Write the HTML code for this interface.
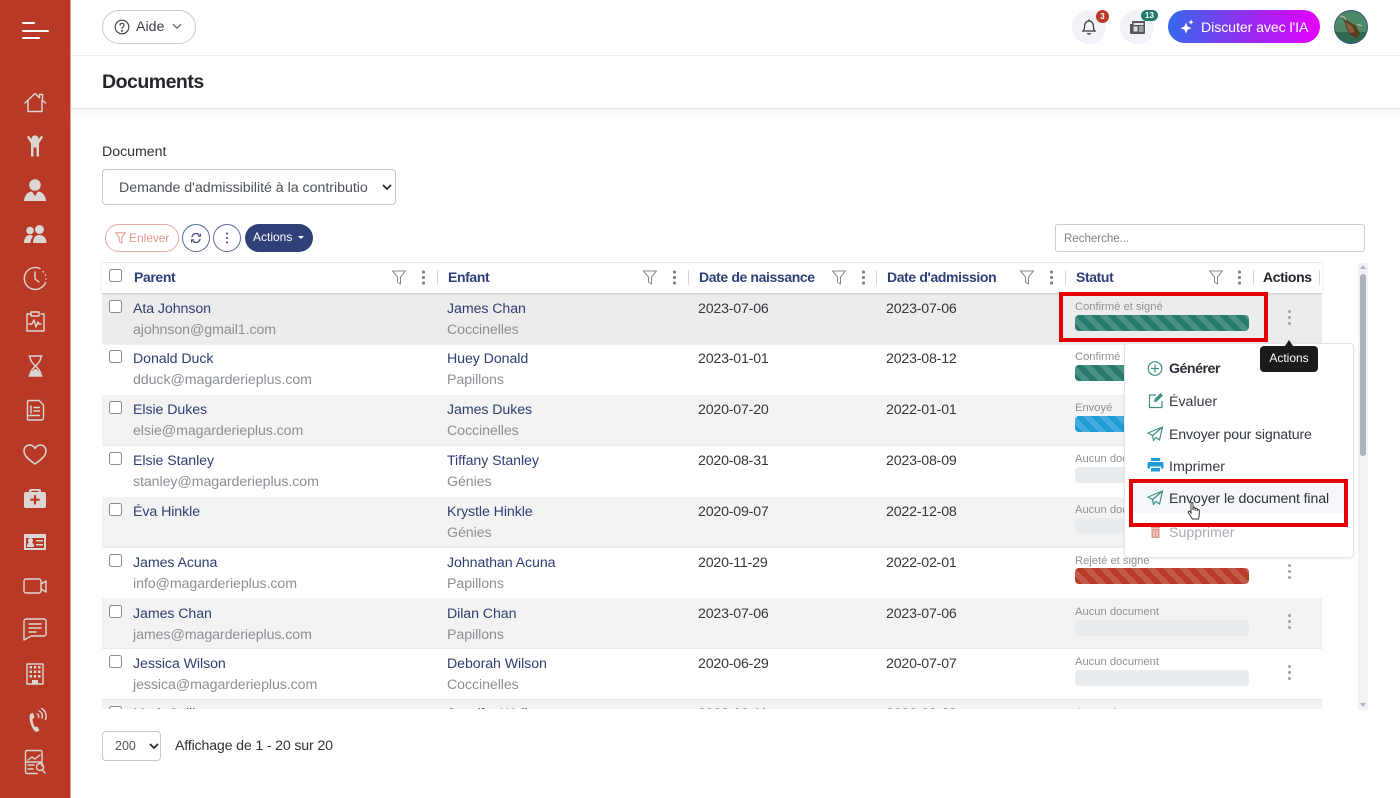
<!DOCTYPE html>
<html lang="fr"><head><meta charset="utf-8"><title>Documents</title>
<style>
html,body{margin:0;padding:0;background:#fff}
body{width:1400px;height:798px;position:relative;overflow:hidden;font-family:"Liberation Sans",Arial,sans-serif;font-size:14.2px;color:#2b2f36}
.t,.a,.n,.s,.d,.h,.l,.m{position:absolute;white-space:nowrap;height:20px;line-height:20px}
.t,.n,.s,.d,.l,.m{margin-top:1px}
.a,svg.a{height:auto;line-height:normal}
.n{left:133px;color:#2f3f73;letter-spacing:-.08px}.s{left:133px;color:#8b9095;letter-spacing:-.08px}
.ch{left:447px}.d{color:#33373d;letter-spacing:-.2px}.d1{left:698px}.d2{left:886px}
.h{font-weight:bold;color:#2f3f78;font-size:14px;top:267px;letter-spacing:-.38px}
.l{left:1075px;font-size:11.2px;color:#8d9296}
.bar{position:absolute;left:1075px;width:174px;height:16px;border-radius:4px;background:#e9ecef}
.g{background:repeating-linear-gradient(45deg,#257a6c 0 5.6px,#4a9186 5.6px 11.3px)}
.b{background:repeating-linear-gradient(45deg,#1f9bd6 0 5.6px,#45aede 5.6px 11.3px)}
.r{background:repeating-linear-gradient(45deg,#b83a28 0 5.6px,#c25a4b 5.6px 11.3px)}
.cb{position:absolute;left:109px;width:11px;height:11px;border:1.3px solid #8c8c8c;border-radius:2.5px;background:#fff}
.row{position:absolute;left:102px;width:1220px}
.odd{background:#f3f3f3}
.sep{position:absolute;top:270px;width:1px;height:15px;background:#d5d8dd}
.k{position:absolute;width:2.6px;height:2.6px;border-radius:50%;background:#7d7f85;box-shadow:0 -5.5px 0 #7d7f85,0 5.5px 0 #7d7f85}
.kr{width:3px;height:3px;background:#9aa3ad;box-shadow:0 -6px 0 #9aa3ad,0 6px 0 #9aa3ad}
.m{left:1169px;color:#343a40;font-size:14.2px}
</style></head><body>

<!-- sidebar -->
<div class="a" style="left:0;top:0;width:70px;height:798px;background:#b83a26;border-right:1px solid #e2a297;box-sizing:content-box"></div>
<svg class="a" style="left:0;top:0" width="70" height="798" viewBox="0 0 70 798" fill="none" stroke="#dbd6d2" stroke-width="1.4" stroke-linecap="round" stroke-linejoin="round">
 <g stroke="#fff" stroke-width="2"><path d="M23 23h11M23 31h25M23 38h16"/></g>
 <!-- home -->
 <path d="M25 103 35 93.500l4.500 4.200v-3.200h3v6L45.500 103M28 100.500v11h14v-11"/>
 <!-- child -->
 <g fill="#dbd6d2" stroke="none"><circle cx="35" cy="139" r="3.600"/><path d="M27 137l1.500-1.500 4 5h5l4-5L43 137l-4 6.500v13h-2.500v-9h-3v9H31v-13z"/></g>
 <!-- person -->
 <g fill="#dbd6d2" stroke="none"><circle cx="35" cy="185" r="5.800"/><path d="M24 201c.5-6 3.500-9 8-9.500l3 4.500 3-4.500c4.500.5 7.500 3.500 8 9.500z"/></g>
 <!-- people -->
 <g fill="#dbd6d2" stroke="none"><circle cx="30" cy="230.500" r="3.800"/><circle cx="39.500" cy="229.500" r="4.500"/><path d="M24 243c0-5 2.500-8 6-8 1.500 0 2.500.5 3 1-1.500 2-2.500 4.500-2.500 7zM33 243c0-5 2.500-8 6.500-8s7 3 7 8z"/></g>
 <!-- clock -->
 <path d="M40 268.500a11 11 0 1 0 5.500 14"/><path d="M35 272v7l4 3"/><path d="M43 271.500l.5.5M45.500 275v.2M46 279v.2" stroke-dasharray="1 1"/>
 <!-- clipboard pulse -->
 <path d="M30 314h-3v17h17v-17h-3M31 312h8v4h-8zM29 324h3l2-4 2 7 2-5 1 2h2" />
 <!-- hourglass -->
 <path d="M29 356h13M29 376h13M30 356c0 4.500 2 6.500 5.500 10 3.500-3.500 5.500-5.500 5.500-10M30 376c0-4.500 2-6.500 5.500-10 3.500 3.500 5.500 5.500 5.500 10"/><path fill="#dbd6d2" d="M31 375.500c.5-3 2.500-5 4.500-6 2 1 4 3 4.500 6z"/>
 <!-- invoice -->
 <path d="M28.500 400.500h10.500l4.500 4.500v13a2 2 0 0 1-2 2h-13a1 1 0 0 1-1-1v-17a1.500 1.500 0 0 1 1-1.500zM34 407.500h5.500M34 411h5.500M29 415.500h10.500M31 406v7"/>
 <!-- heart -->
 <path d="M35 464c-7-5-11-8.500-11-13 0-3.500 2.500-6 5.500-6 2.500 0 4.500 1.500 5.500 3.500 1-2 3-3.500 5.500-3.500 3 0 5.500 2.500 5.500 6 0 4.500-4 8-11 13z" stroke-width="1.500"/>
 <!-- medkit -->
 <path fill="#dbd6d2" stroke="none" d="M31 489h8a2 2 0 0 1 2 2v1h3a2 2 0 0 1 2 2v12a2 2 0 0 1-2 2H26a2 2 0 0 1-2-2v-12a2 2 0 0 1 2-2h3v-1a2 2 0 0 1 2-2zm.500 1.800v1.200h7v-1.200z"/><path stroke="#b83a26" stroke-width="2.200" d="M35 496v7.500M31.200 499.700h7.600"/>
 <!-- id -->
 <path fill="#dbd6d2" stroke="none" d="M24 534h22v16H24zm2 4v10h18v-10z"/><path fill="#dbd6d2" stroke="none" d="M27 547c0-3 1-4 2-4.500a2.500 2.500 0 1 1 3 0c1 .5 2 1.500 2 4.500zM36 540h7v1.500h-7zM36 544h7v1.500h-7z"/>
 <!-- video -->
 <path d="M26 579h13a2 2 0 0 1 2 2v10a2 2 0 0 1-2 2H26a2 2 0 0 1-2-2v-10a2 2 0 0 1 2-2zM41 584l5-3v11l-5-3"/>
 <!-- chat -->
 <path d="M26 619h18a2 2 0 0 1 2 2v13a2 2 0 0 1-2 2H31l-7 4v-19a2 2 0 0 1 2-2zM29 624h12M29 628h12M29 632h7"/>
 <!-- building -->
 <path d="M27 664h16v20H27z"/><path stroke="none" fill="#dbd6d2" d="M29.500 666h2.500v2.500h-2.500zM33.800 666h2.500v2.500h-2.500zM38 666h2.500v2.500H38zM29.500 670.500h2.500v2.500h-2.500zM33.800 670.500h2.500v2.500h-2.500zM38 670.500h2.500v2.500H38zM29.500 675h2.500v2.500h-2.500zM33.800 675h2.500v2.500h-2.500zM38 675h2.500v2.500H38zM32 680h6v4h-6z"/>
 <!-- phone -->
 <path fill="#dbd6d2" stroke="none" d="M30 714l3-1 1.500 4.500-2 1.500c0 3 1 6 2.500 8l2.500-.5 2 4-3 1.500c-5-2-8-13-6.500-18z"/><path d="M37 714c1.500.5 2 2 1.500 3.500M39 711c3 1 4 4 3 7M41.500 708.500c4 2 5.500 6.500 4 11"/>
 <!-- report -->
 <path d="M42 766v-14a1.500 1.500 0 0 0-1.500-1.500H27a1.500 1.500 0 0 0-1.500 1.500v20a1.500 1.500 0 0 0 1.500 1.500h10M28 760l4-3 3 2 5-4M26 762h16M28 765h6M28 769h5"/><circle cx="40" cy="767" r="3.500"/><path d="M42.500 770l2.500 3"/>
</svg>

<!-- topbar -->
<div class="a" style="left:71px;top:55px;width:1329px;height:1px;background:#eceef1"></div>
<div class="a" style="left:102px;top:10px;width:92px;height:32px;border:1px solid #c4c9d2;border-radius:17px"></div>
<svg class="a" style="left:114px;top:19px" width="16" height="16" viewBox="0 0 16 16" fill="none" stroke="#3d4148" stroke-width="1.100"><circle cx="8" cy="8" r="6.800"/><path d="M6 6.300a2 2 0 1 1 3 1.700c-.7.400-1 .9-1 1.500" stroke-linecap="round"/><circle cx="8" cy="11.700" r=".4" fill="#3d4148"/></svg>
<div class="t" style="left:136px;top:16px;color:#3b4046">Aide</div>
<svg class="a" style="left:172px;top:23px" width="10" height="7" viewBox="0 0 10 7" fill="none" stroke="#5a5f66" stroke-width="1.100"><path d="M1 1.200l4 4 4-4"/></svg>

<div class="a" style="left:1072px;top:10px;width:34px;height:34px;border-radius:50%;background:#f1f3f9"></div>
<svg class="a" style="left:1081px;top:18px" width="16" height="18" viewBox="0 0 16 18" fill="none" stroke="#33363b" stroke-width="1.200"><path d="M2 13c1.200-1.200 1.600-2.500 1.600-5C3.600 5 5.500 3 8 3s4.400 2 4.400 5c0 2.500.4 3.800 1.600 5zM8 1.300V3M6.500 15a1.600 1.600 0 0 0 3 0"/></svg>
<div class="a" style="left:1096px;top:10px;width:13px;height:13px;border-radius:50%;background:#b83a28;color:#fff;font-size:8px;font-weight:bold;line-height:13px;text-align:center">3</div>
<div class="a" style="left:1120px;top:10px;width:34px;height:34px;border-radius:50%;background:#f1f3f9"></div>
<svg class="a" style="left:1130px;top:20px" width="15" height="14" viewBox="0 0 15 14"><path fill="#55585c" d="M2 1h13v12a1 1 0 0 1-1 1H1a1 1 0 0 1-1-1V4h2z"/><path fill="#dfe1e5" d="M3.500 3h10v2h-10zM3.500 6.500h4v5h-4zM9 6.500h4.500v1H9zM9 8.500h4.500v1H9zM9 10.500h4.500v1H9z"/></svg>
<div class="a" style="left:1141px;top:10px;width:17px;height:11px;border-radius:6px;background:#227a6c;color:#fff;font-size:8px;font-weight:bold;line-height:11px;text-align:center">13</div>

<div class="a" style="left:1168px;top:10px;width:152px;height:33px;border-radius:17px;background:linear-gradient(90deg,#3468ec 0%,#9a2af0 55%,#e600ff 100%)"></div>
<svg class="a" style="left:1180px;top:19px" width="14" height="15" viewBox="0 0 14 15" fill="#fff"><path d="M6 3.500l1.600 4 4 1.600-4 1.600L6 14.500l-1.600-3.800-4-1.600 4-1.600zM11 .5l.8 1.900 1.900.8-1.900.8-.8 1.900-.8-1.900-1.900-.8 1.900-.8z"/></svg>
<div class="t" style="left:1201px;top:17px;color:#fff;font-size:14.2px;letter-spacing:-.1px">Discuter avec l'IA</div>
<svg class="a" style="left:1334px;top:10px" width="34" height="34" viewBox="0 0 34 34"><defs><clipPath id="av"><circle cx="17" cy="17" r="16"/></clipPath></defs><circle cx="17" cy="17" r="17" fill="#3c4f7d"/><g clip-path="url(#av)"><rect width="34" height="34" fill="#4c8a68"/><rect y="22" width="34" height="12" fill="#2f6a50"/><path d="M8 8l6 3 8 5 4 8-3 4-7-3-4-8-1-5z" fill="#5b3a22"/><path d="M12 12l6 4 3 6-5 1-3-6z" fill="#8a5f3c"/><path d="M6 6l4 1 2 3M23 14l5 2" stroke="#c9b9a4" stroke-width="1.200" fill="none"/></g></svg>

<div class="t" style="left:102px;top:71px;font-size:19.500px;font-weight:bold;color:#23272d;letter-spacing:-.5px">Documents</div>
<div class="a" style="left:71px;top:108px;width:1329px;height:1px;background:#dfe1e5"></div>
<div class="a" style="left:71px;top:109px;width:1329px;height:14px;background:linear-gradient(#f7f7f8,#fff)"></div>

<div class="t" style="left:102px;top:140px;color:#2f3338;margin-top:1.500px;letter-spacing:-.03px"><span style="position:relative;top:.5px">Document</span></div>
<div class="a" style="left:102px;top:169px;width:292px;height:34px;border:1px solid #c3c8d1;border-radius:4px"></div>
<div class="t" style="left:119px;top:177px;color:#4c5258;letter-spacing:-.02px">Demande d'admissibilité à la contributio</div>
<svg class="a" style="left:382px;top:184px" width="10" height="7" viewBox="0 0 10 7" fill="none" stroke="#2b2b2b" stroke-width="1.800"><path d="M1 1l4 4 4-4"/></svg>

<!-- toolbar -->
<div class="a" style="left:105px;top:224px;width:72px;height:26px;border:1px solid #e4a89f;border-radius:14px"></div>
<svg class="a" style="left:115px;top:232px" width="11" height="12" viewBox="0 0 11 12" fill="none" stroke="#e1978b" stroke-width="1"><path d="M.5.700h10L6.800 5.500v5.500L4.200 9.500v-4z"/></svg>
<div class="t" style="left:129px;top:227px;color:#e1978b;font-size:12px;letter-spacing:-.05px">Enlever</div>
<div class="a" style="left:182px;top:224px;width:26px;height:26px;border:1px solid #5a6a9a;border-radius:50%"></div>
<svg class="a" style="left:190px;top:232px" width="12" height="12" viewBox="0 0 16 14" fill="none" stroke="#33437a" stroke-width="1.500"><path d="M2.500 6a5.500 5.500 0 0 1 10-2.500M13.500 8a5.500 5.500 0 0 1-10 2.500"/><path d="M14 1v3.500h-3.500M2 13V9.500h3.500" stroke-width="1.200"/></svg>
<div class="a" style="left:213px;top:224px;width:26px;height:26px;border:1px solid #5a6a9a;border-radius:50%"></div>
<div class="k" style="left:225.500px;top:237px;background:#33437a;box-shadow:0 -4.500px 0 #33437a,0 4.500px 0 #33437a;width:2.200px;height:2.200px"></div>
<div class="a" style="left:245px;top:224px;width:68px;height:28px;border-radius:14px;background:#2f4178"></div>
<div class="t" style="left:253px;top:226px;color:#fff;font-size:12px">Actions</div>
<div class="a" style="left:298px;top:236px;border:3px solid transparent;border-top-color:#fff;border-bottom:0"></div>
<div class="a" style="left:1055px;top:224px;width:308px;height:26px;border:1px solid #c9ced6;border-radius:3px"></div>
<div class="t" style="left:1064px;top:228px;color:#7c8288;font-size:11.500px">Recherche...</div>

<!-- table rows -->
<div class="row" style="top:293px;height:51px;background:#ececec"></div>
<div class="row odd" style="top:395px;height:50px"></div>
<div class="row odd" style="top:497px;height:50px"></div>
<div class="row odd" style="top:598px;height:50px"></div>
<div class="row odd" style="top:699px;height:10px;background:#f3f3f3"></div>
<div class="row" style="top:344px;height:1px;background:#eef0f2"></div>
<div class="row" style="top:445px;height:1px;background:#e8eaec"></div>
<div class="row" style="top:547px;height:1px;background:#e8eaec"></div>
<div class="row" style="top:648px;height:1px;background:#e8eaec"></div>
<div class="row" style="top:699px;height:1px;background:#e4e6e8"></div>
<div class="row" style="top:262px;height:1px;background:#e8eaee"></div>
<div class="row" style="top:263px;height:30px;background:#fff;box-shadow:0 1px 2px rgba(0,0,0,.16)"></div>

<div class="cb" style="top:269px"></div>
<div class="h" style="left:134px">Parent</div>
<div class="h" style="left:448px">Enfant</div>
<div class="h" style="left:699px">Date de naissance</div>
<div class="h" style="left:887px">Date d'admission</div>
<div class="h" style="left:1076px">Statut</div>
<div class="h" style="left:1263px;color:#23272d">Actions</div>
<svg class="a" style="left:0;top:0" width="1400" height="300" fill="none" stroke="#85888d" stroke-width="1"><path d="M392.500 271h13L400.500 277v7l-3-2v-5zM643.500 271h13L651.500 277v7l-3-2v-5zM832.500 271h13L840.500 277v7l-3-2v-5zM1020.500 271h13L1028.500 277v7l-3-2v-5zM1209.500 271h13L1217.500 277v7l-3-2v-5z"/></svg>
<div class="k" style="left:422px;top:276px"></div><div class="k" style="left:673px;top:276px"></div><div class="k" style="left:862px;top:276px"></div><div class="k" style="left:1050px;top:276px"></div><div class="k" style="left:1238px;top:276px"></div>
<div class="sep" style="left:437px"></div><div class="sep" style="left:688px"></div><div class="sep" style="left:876px"></div><div class="sep" style="left:1065px"></div><div class="sep" style="left:1253px"></div><div class="sep" style="left:1319px"></div>

<!-- row data -->
<div class="cb" style="top:300px"></div><div class="n" style="top:298px">Ata Johnson</div><div class="s" style="top:319px">ajohnson@gmail1.com</div><div class="n ch" style="top:298px">James Chan</div><div class="s ch" style="top:319px">Coccinelles</div><div class="d d1" style="top:298px">2023-07-06</div><div class="d d2" style="top:298px">2023-07-06</div><div class="l" style="top:296px">Confirmé et signé</div><div class="bar g" style="top:315px"></div><div class="k kr" style="left:1288px;top:316px"></div>

<div class="cb" style="top:350px"></div><div class="n" style="top:348px">Donald Duck</div><div class="s" style="top:369px">dduck@magarderieplus.com</div><div class="n ch" style="top:348px">Huey Donald</div><div class="s ch" style="top:369px">Papillons</div><div class="d d1" style="top:348px">2023-01-01</div><div class="d d2" style="top:348px">2023-08-12</div><div class="l" style="top:346px">Confirmé et signé</div><div class="bar g" style="top:365px"></div>

<div class="cb" style="top:401px"></div><div class="n" style="top:399px">Elsie Dukes</div><div class="s" style="top:420px">elsie@magarderieplus.com</div><div class="n ch" style="top:399px">James Dukes</div><div class="s ch" style="top:420px">Coccinelles</div><div class="d d1" style="top:399px">2020-07-20</div><div class="d d2" style="top:399px">2022-01-01</div><div class="l" style="top:397px">Envoyé</div><div class="bar b" style="top:416px"></div>

<div class="cb" style="top:452px"></div><div class="n" style="top:450px">Elsie Stanley</div><div class="s" style="top:471px">stanley@magarderieplus.com</div><div class="n ch" style="top:450px">Tiffany Stanley</div><div class="s ch" style="top:471px">Génies</div><div class="d d1" style="top:450px">2020-08-31</div><div class="d d2" style="top:450px">2023-08-09</div><div class="l" style="top:448px">Aucun document</div><div class="bar" style="top:467px"></div>

<div class="cb" style="top:503px"></div><div class="n" style="top:501px">Éva Hinkle</div><div class="n ch" style="top:501px">Krystle Hinkle</div><div class="s ch" style="top:522px">Génies</div><div class="d d1" style="top:501px">2020-09-07</div><div class="d d2" style="top:501px">2022-12-08</div><div class="l" style="top:499px">Aucun document</div><div class="bar" style="top:518px"></div>

<div class="cb" style="top:554px"></div><div class="n" style="top:552px">James Acuna</div><div class="s" style="top:573px">info@magarderieplus.com</div><div class="n ch" style="top:552px">Johnathan Acuna</div><div class="s ch" style="top:573px">Papillons</div><div class="d d1" style="top:552px">2020-11-29</div><div class="d d2" style="top:552px">2022-02-01</div><div class="l" style="top:550px">Rejeté et signé</div><div class="bar r" style="top:568px"></div><div class="k kr" style="left:1288px;top:570px"></div>

<div class="cb" style="top:605px"></div><div class="n" style="top:603px">James Chan</div><div class="s" style="top:624px">james@magarderieplus.com</div><div class="n ch" style="top:603px">Dilan Chan</div><div class="s ch" style="top:624px">Papillons</div><div class="d d1" style="top:603px">2023-07-06</div><div class="d d2" style="top:603px">2023-07-06</div><div class="l" style="top:601px">Aucun document</div><div class="bar" style="top:620px"></div><div class="k kr" style="left:1288px;top:620px"></div>

<div class="cb" style="top:655px"></div><div class="n" style="top:653px">Jessica Wilson</div><div class="s" style="top:674px">jessica@magarderieplus.com</div><div class="n ch" style="top:653px">Deborah Wilson</div><div class="s ch" style="top:674px">Coccinelles</div><div class="d d1" style="top:653px">2020-06-29</div><div class="d d2" style="top:653px">2020-07-07</div><div class="l" style="top:651px">Aucun document</div><div class="bar" style="top:670px"></div><div class="k kr" style="left:1288px;top:671px"></div>

<div class="a" style="left:102px;top:706px;width:1220px;height:3px;overflow:hidden"><div class="cb" style="left:7px;top:0"></div><div class="n" style="left:31px;top:-3px">Mark Collins</div><div class="n" style="left:345px;top:-3px">Jennifer Walker</div><div class="d" style="left:596px;top:-3px">2022-03-11</div><div class="d" style="left:784px;top:-3px">2022-03-28</div><div class="l" style="left:973px;top:-4px">Aucun document</div></div>

<!-- scrollbar -->
<div class="a" style="left:1358px;top:263px;width:10px;height:447px;background:#f1f3f9"></div>
<div class="a" style="left:1360px;top:274px;width:6px;height:182px;background:#abb3bd;border-radius:3px"></div>
<div class="a" style="left:1360px;top:265px;border:3px solid transparent;border-bottom:4px solid #aab2bc;border-top:0"></div>
<div class="a" style="left:1360px;top:703px;border:3px solid transparent;border-top:4px solid #aab2bc;border-bottom:0"></div>

<!-- menu -->
<div class="a" style="left:1124px;top:343px;width:228px;height:213px;background:#fff;border:1px solid #e3e4e6;border-radius:4px;box-shadow:0 1px 3px rgba(0,0,0,.06)"></div>
<div class="a" style="left:1132px;top:482px;width:214px;height:31px;background:#f5f7fa"></div>
<div class="m" style="top:358px;font-weight:bold;color:#2b2f36;letter-spacing:-.5px">Générer</div>
<div class="m" style="top:391px">Évaluer</div>
<div class="m" style="top:424px;letter-spacing:-.18px">Envoyer pour signature</div>
<div class="m" style="top:456px">Imprimer</div>
<div class="m" style="top:488px;color:#2f3338;letter-spacing:-.13px">Envoyer le document final</div>
<div class="m" style="top:522px;color:#a8adb3">Supprimer</div>
<svg class="a" style="left:1146px;top:358px" width="20" height="185" viewBox="0 0 20 185" fill="none" stroke="#3f8f83" stroke-width="1.200" stroke-linejoin="round" stroke-linecap="round">
 <circle cx="9" cy="10.500" r="6.800"/><path d="M9 7v7M5.500 10.500h7"/>
 <path d="M9.500 37H3.500v12.500H16v-6" /><path fill="#3f8f83" stroke="none" d="M14.500 35l2.500 2.500-6 6-3 .6.600-3z"/>
 <path d="M16.500 69 2 75l4.500 2.500 1 5 2.500-3 3.500 2.500zM6.500 77.500 16.500 69" />
 <path stroke="none" fill="#1f9bd6" d="M5 100h9v3H5zM3 104h13a1.500 1.500 0 0 1 1.500 1.500v5H15v-2H4v2H1.500v-5A1.500 1.500 0 0 1 3 104zM5 110h9v3.500H5z"/>
 <path d="M16.500 133 2 139l4.500 2.500 1 5 2.500-3 3.500 2.500zM6.500 141.500 16.500 133"/>
 <path stroke="none" fill="#e0998e" d="M5 169h9v1.500H5zM5.500 171h8v9h-8z"/><path stroke="#fff" stroke-width=".8" d="M8 172.500v6M11 172.500v6"/>
</svg>

<!-- tooltip -->
<div class="a" style="left:1285px;top:340px;border:4px solid transparent;border-bottom:6px solid #1b1b1b;border-top:0"></div>
<div class="a" style="left:1260px;top:346px;width:58px;height:26px;background:#1b1b1b;border-radius:4px;color:#fff;font-size:12px;line-height:24px;text-align:center">Actions</div>

<!-- red boxes -->
<div class="a" style="left:1059px;top:292px;width:201px;height:42px;border:4px solid #e30000"></div>
<div class="a" style="left:1129px;top:479px;width:211px;height:40px;border:4px solid #e30000"></div>

<!-- cursor -->
<svg class="a" style="left:1187px;top:502px" width="15" height="20" viewBox="0 0 15 20"><path d="M4 1.500c0-1.300 2-1.300 2 0V8l.3-2c.2-1 1.700-1 1.800 0v2.500l.3-1.500c.2-1 1.700-1 1.800 0v2l.3-1c.3-1 1.800-.7 1.800.5v4c0 2-.5 3-1 4.500H5.500L1.500 11c-.8-1 .5-2.500 1.500-1.500L4 11z" fill="#fff" stroke="#3a3a3a" stroke-width="1"/></svg>

<!-- footer -->
<div class="a" style="left:102px;top:731px;width:57px;height:28px;border:1px solid #c3c8d1;border-radius:4px"></div>
<div class="t" style="left:115px;top:735px;color:#51575d;font-size:12.500px">200</div>
<svg class="a" style="left:149px;top:743px" width="10" height="7" viewBox="0 0 10 7" fill="none" stroke="#2b2b2b" stroke-width="1.800"><path d="M1 1l4 4 4-4"/></svg>
<div class="t" style="left:175px;top:735px;color:#2f3338;letter-spacing:-.17px">Affichage de 1 - 20 sur 20</div>
</body></html>
